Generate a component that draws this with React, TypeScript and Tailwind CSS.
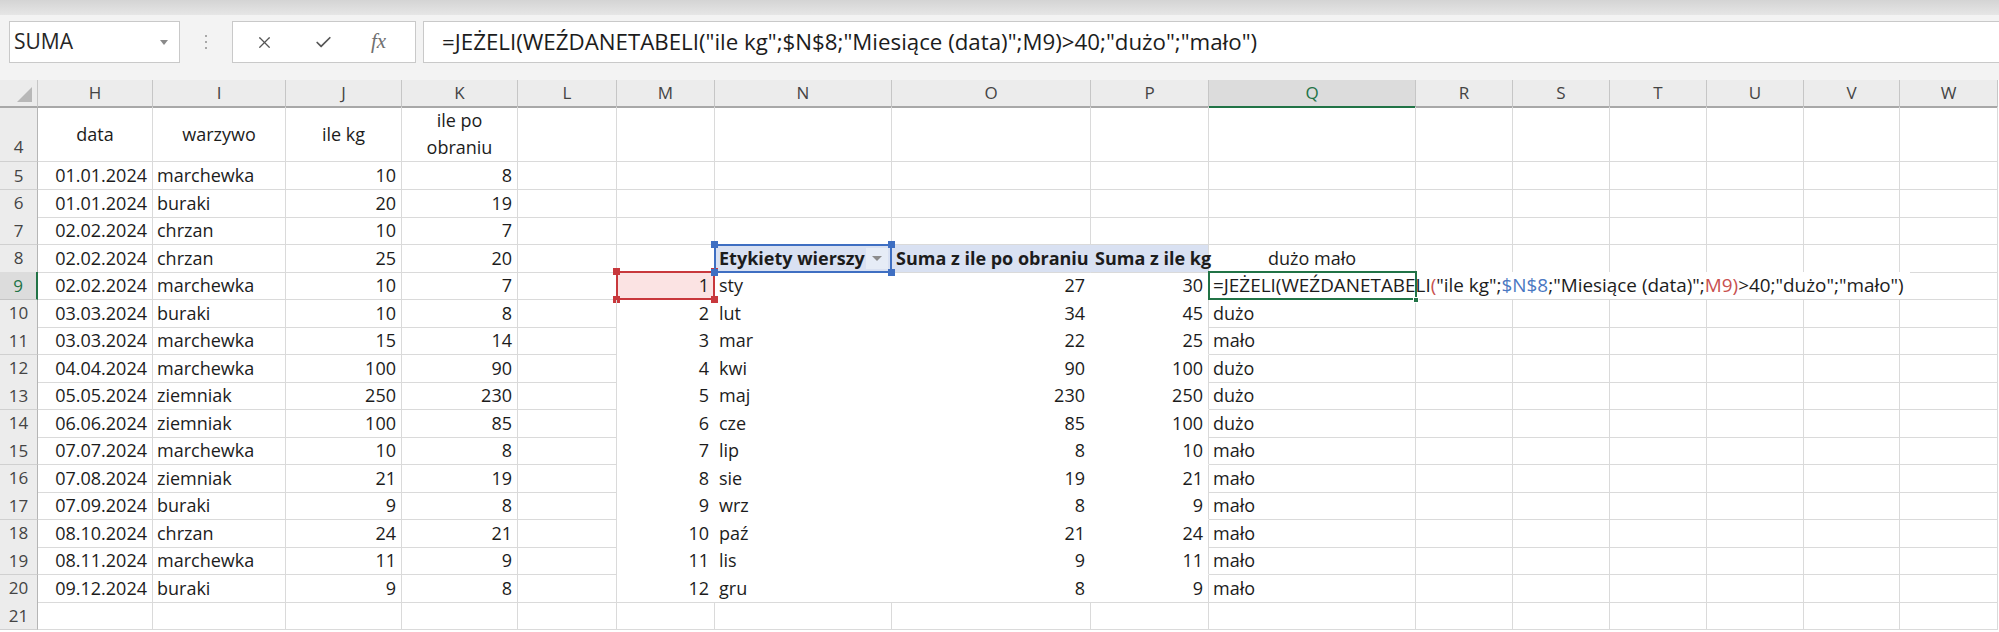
import { Check, X } from 'lucide-react'
import type { ReactNode } from 'react'

const COLS = ['H', 'I', 'J', 'K', 'L', 'M', 'N', 'O', 'P', 'Q', 'R', 'S', 'T', 'U', 'V', 'W']

const source: [string, string, number, number][] = [
  ['01.01.2024', 'marchewka', 10, 8],
  ['01.01.2024', 'buraki', 20, 19],
  ['02.02.2024', 'chrzan', 10, 7],
  ['02.02.2024', 'chrzan', 25, 20],
  ['02.02.2024', 'marchewka', 10, 7],
  ['03.03.2024', 'buraki', 10, 8],
  ['03.03.2024', 'marchewka', 15, 14],
  ['04.04.2024', 'marchewka', 100, 90],
  ['05.05.2024', 'ziemniak', 250, 230],
  ['06.06.2024', 'ziemniak', 100, 85],
  ['07.07.2024', 'marchewka', 10, 8],
  ['07.08.2024', 'ziemniak', 21, 19],
  ['07.09.2024', 'buraki', 9, 8],
  ['08.10.2024', 'chrzan', 24, 21],
  ['08.11.2024', 'marchewka', 11, 9],
  ['09.12.2024', 'buraki', 9, 8],
]

// M, N, O, P, Q for rows 9..20
const pivot: [number, string, number, number, string][] = [
  [1, 'sty', 27, 30, ''],
  [2, 'lut', 34, 45, 'dużo'],
  [3, 'mar', 22, 25, 'mało'],
  [4, 'kwi', 90, 100, 'dużo'],
  [5, 'maj', 230, 250, 'dużo'],
  [6, 'cze', 85, 100, 'dużo'],
  [7, 'lip', 8, 10, 'mało'],
  [8, 'sie', 19, 21, 'mało'],
  [9, 'wrz', 8, 9, 'mało'],
  [10, 'paź', 21, 24, 'mało'],
  [11, 'lis', 9, 11, 'mało'],
  [12, 'gru', 8, 9, 'mało'],
]

const grid =
  'grid grid-cols-[38px_115px_133px_116px_116px_99px_98px_177px_199px_118px_207px_97px_97px_97px_97px_96px_98px]'

function Handle({ pos, color }: { pos: string; color: string }) {
  return <span className={`absolute h-[7px] w-[7px] ${pos} ${color}`} />
}

function FormulaInCell() {
  return (
    <span className="whitespace-nowrap text-[18.9px]">
      =JEŻELI(WEŹDANETABELI
      <span className="text-[#c8504f]">(</span>
      "ile kg";<span className="text-[#4a78c2]">$N$8</span>;"Miesiące (data)";
      <span className="text-[#c8504f]">M9</span>
      <span className="text-[#c8504f]">)</span>
      &gt;40;"dużo";"mało")
    </span>
  )
}

function Cell({
  children,
  align = 'left',
  className = '',
}: {
  children?: ReactNode
  align?: 'left' | 'right' | 'center'
  className?: string
}) {
  const a = align === 'right' ? 'justify-end pr-[5px]' : align === 'center' ? 'justify-center' : 'justify-start pl-[4px]'
  return (
    <div className={`relative flex items-center overflow-visible whitespace-nowrap border-b border-r ${a} ${className}`}>
      {children}
    </div>
  )
}

function DataRow({ r }: { r: number }) {
  const src = source[r - 5]
  const pv = r >= 9 ? pivot[r - 9] : undefined
  const inPivot = r >= 9 && r <= 20
  const noBottom = inPivot && r < 20 ? 'border-b-transparent' : 'border-b-[#dadada]'
  const active = r === 9

  return (
    <div className={`${grid} h-[27.5px]`}>
      <div
        className={`flex items-center justify-center border-b text-[17px] ${
          active
            ? 'border-r-2 border-b-[#c4c4c4] border-r-[#217346] bg-[#dcdcdc] text-[#217346]'
            : 'border-r border-b-[#d0d0d0] border-r-[#b5b5b5] bg-[#ececec] text-[#444]'
        }`}
      >
        {r}
      </div>
      <Cell align="right" className="border-[#dadada]">{src?.[0]}</Cell>
      <Cell className="border-[#dadada]">{src?.[1]}</Cell>
      <Cell align="right" className="border-[#dadada]">{src?.[2]}</Cell>
      <Cell align="right" className="border-[#dadada]">{src?.[3]}</Cell>
      <Cell className="border-[#dadada]" />
      {/* M */}
      <Cell align="right" className={`${inPivot ? 'border-r-transparent' : 'border-r-[#dadada]'} ${noBottom} ${active ? 'bg-[#fbe3e3]' : ''}`}>
        {pv?.[0]}
        {active && (
          <>
            <span className="absolute inset-x-[-1px] top-[-1px] bottom-[-1px] border-2 border-[#c8383c]" />
            <Handle pos="left-[-4px] top-[-4px]" color="bg-[#c8383c]" />
            <Handle pos="right-[-4px] top-[-4px]" color="bg-[#c8383c]" />
            <Handle pos="left-[-4px] bottom-[-4px]" color="bg-[#c8383c]" />
            <Handle pos="right-[-4px] bottom-[-4px]" color="bg-[#c8383c]" />
          </>
        )}
      </Cell>
      {/* N */}
      <Cell className={`${inPivot ? 'border-r-transparent' : 'border-r-[#dadada]'} ${noBottom}`}>{pv?.[1]}</Cell>
      {/* O */}
      <Cell align="right" className={`${inPivot ? 'border-r-transparent' : 'border-r-[#dadada]'} ${noBottom}`}>
        {pv?.[2]}
      </Cell>
      {/* P */}
      <Cell align="right" className={`border-r-[#dadada] ${noBottom}`}>{pv?.[3]}</Cell>
      {/* Q */}
      <Cell className="border-[#dadada]">
        {active ? (
          <>
            <span className="absolute left-0 top-0 bottom-0 z-10 flex items-center bg-white pl-[4px] pr-[6px]">
              <FormulaInCell />
            </span>
            <span className="absolute left-[-1px] top-[-1px] bottom-[-1px] z-20 w-[209px] border-2 border-[#217346]" />
            <span className="absolute bottom-[-4px] right-[-4px] z-20 h-[6px] w-[6px] border border-white bg-[#217346]" />
          </>
        ) : (
          pv?.[4]
        )}
      </Cell>
      {COLS.slice(10).map((c) => (
        <Cell key={c} className="border-[#dadada]" />
      ))}
    </div>
  )
}

export default function App() {
  return (
    <div className="h-[632px] w-[1999px] overflow-hidden bg-white font-['Open_Sans',sans-serif] text-[18px] text-[#1c1c1c]">
      {/* top strip */}
      <div className="h-[15px] bg-gradient-to-b from-[#d4d4d4] to-[#e6e6e6]" />

      {/* formula bar */}
      <div className="flex h-[65px] items-start bg-[#f3f3f3] pt-[6px]">
        <div className="ml-[9px] flex h-[42px] w-[171px] items-center justify-between border border-[#c9c9c9] bg-white pl-[4px] pr-[11px]">
          <span className="text-[21px] text-[#262626]">SUMA</span>
          <span className="h-0 w-0 border-x-[4px] border-t-[5px] border-x-transparent border-t-[#8a8a8a]" />
        </div>
        <div className="flex h-[42px] w-[52px] flex-col items-center justify-center gap-[4px]">
          <span className="h-[2px] w-[2px] bg-[#a8a8a8]" />
          <span className="h-[2px] w-[2px] bg-[#a8a8a8]" />
          <span className="h-[2px] w-[2px] bg-[#a8a8a8]" />
        </div>
        <div className="flex h-[42px] w-[184px] items-center border border-[#c9c9c9] bg-white">
          <X className="ml-[22px] h-[19px] w-[19px] text-[#555]" strokeWidth={1.6} />
          <Check className="ml-[40px] h-[19px] w-[19px] text-[#555]" strokeWidth={2.2} />
          <span className="ml-[38px] font-['Liberation_Serif',serif] text-[21px] italic text-[#707070]">fx</span>
        </div>
        <div className="ml-[7px] flex h-[42px] flex-1 items-center border border-r-0 border-[#c9c9c9] bg-white pl-[18px]">
          <span className="whitespace-nowrap text-[22.3px] text-[#1c1c1c]">
            =JEŻELI(WEŹDANETABELI("ile kg";$N$8;"Miesiące (data)";M9)&gt;40;"dużo";"mało")
          </span>
        </div>
      </div>

      {/* column headers */}
      <div className={`${grid} h-[27px]`}>
        <div className="relative border-b-2 border-r border-b-[#a8a8a8] border-r-[#c6c6c6] bg-[#ececec]">
          <span className="absolute bottom-[4px] right-[5px] h-0 w-0 border-b-[15px] border-l-[15px] border-b-[#b8b8b8] border-l-transparent" />
        </div>
        {COLS.map((c) =>
          c === 'Q' ? (
            <div
              key={c}
              className="flex items-center justify-center border-b-2 border-r border-b-[#217346] border-r-[#c6c6c6] bg-[#dcdcdc] text-[17px] text-[#217346]"
            >
              {c}
            </div>
          ) : (
            <div
              key={c}
              className="flex items-center justify-center border-b-2 border-r border-b-[#a8a8a8] border-r-[#c6c6c6] bg-[#ececec] text-[17px] text-[#444]"
            >
              {c}
            </div>
          )
        )}
      </div>

      {/* row 4 */}
      <div className={`${grid} h-[55px]`}>
        <div className="flex items-end justify-center border-b border-r border-b-[#d0d0d0] border-r-[#b5b5b5] bg-[#ececec] pb-[2px] text-[17px] text-[#444]">
          4
        </div>
        <Cell align="center" className="border-[#dadada]">data</Cell>
        <Cell align="center" className="border-[#dadada]">warzywo</Cell>
        <Cell align="center" className="border-[#dadada]">ile kg</Cell>
        <div className="flex flex-col items-center justify-center border-b border-r border-[#dadada] leading-[27px]">
          <span>ile po</span>
          <span>obraniu</span>
        </div>
        {COLS.slice(4).map((c) => (
          <Cell key={c} className="border-[#dadada]" />
        ))}
      </div>

      {[5, 6, 7].map((r) => (
        <DataRow key={r} r={r} />
      ))}

      {/* row 8 with pivot header */}
      <div className={`${grid} h-[27.5px]`}>
        <div className="flex items-center justify-center border-b border-r border-b-[#d0d0d0] border-r-[#b5b5b5] bg-[#ececec] text-[17px] text-[#444]">
          8
        </div>
        <Cell align="right" className="border-[#dadada]">{source[3][0]}</Cell>
        <Cell className="border-[#dadada]">{source[3][1]}</Cell>
        <Cell align="right" className="border-[#dadada]">{source[3][2]}</Cell>
        <Cell align="right" className="border-[#dadada]">{source[3][3]}</Cell>
        <Cell className="border-[#dadada]" />
        <Cell className="border-[#dadada]" />
        <Cell className="border-b-[#dadada] border-r-[#d9e1f2] bg-[#d9e1f2] font-bold">
          Etykiety wierszy
          <span className="absolute bottom-[3px] right-[3px] top-[3px] flex w-[22px] items-center justify-center bg-[#e6ecf6]">
            <span className="h-0 w-0 border-x-[5px] border-t-[5px] border-x-transparent border-t-[#8c8c8c]" />
          </span>
          <span className="absolute inset-x-[-1px] top-[-1px] bottom-[-1px] z-10 border-2 border-[#3f6fc2]" />
          <Handle pos="left-[-4px] top-[-4px] z-10" color="bg-[#3f6fc2]" />
          <Handle pos="right-[-4px] top-[-4px] z-10" color="bg-[#3f6fc2]" />
          <Handle pos="left-[-4px] bottom-[-4px] z-10" color="bg-[#3f6fc2]" />
          <Handle pos="right-[-4px] bottom-[-4px] z-10" color="bg-[#3f6fc2]" />
        </Cell>
        <Cell className="border-b-[#dadada] border-r-[#d9e1f2] bg-[#d9e1f2] font-bold">Suma z ile po obraniu</Cell>
        <Cell className="border-[#dadada] bg-[#d9e1f2] font-bold">Suma z ile kg</Cell>
        <Cell align="center" className="border-[#dadada]">dużo mało</Cell>
        {COLS.slice(10).map((c) => (
          <Cell key={c} className="border-[#dadada]" />
        ))}
      </div>

      {Array.from({ length: 12 }, (_, i) => i + 9).map((r) => (
        <DataRow key={r} r={r} />
      ))}
      <DataRow r={21} />
    </div>
  )
}
